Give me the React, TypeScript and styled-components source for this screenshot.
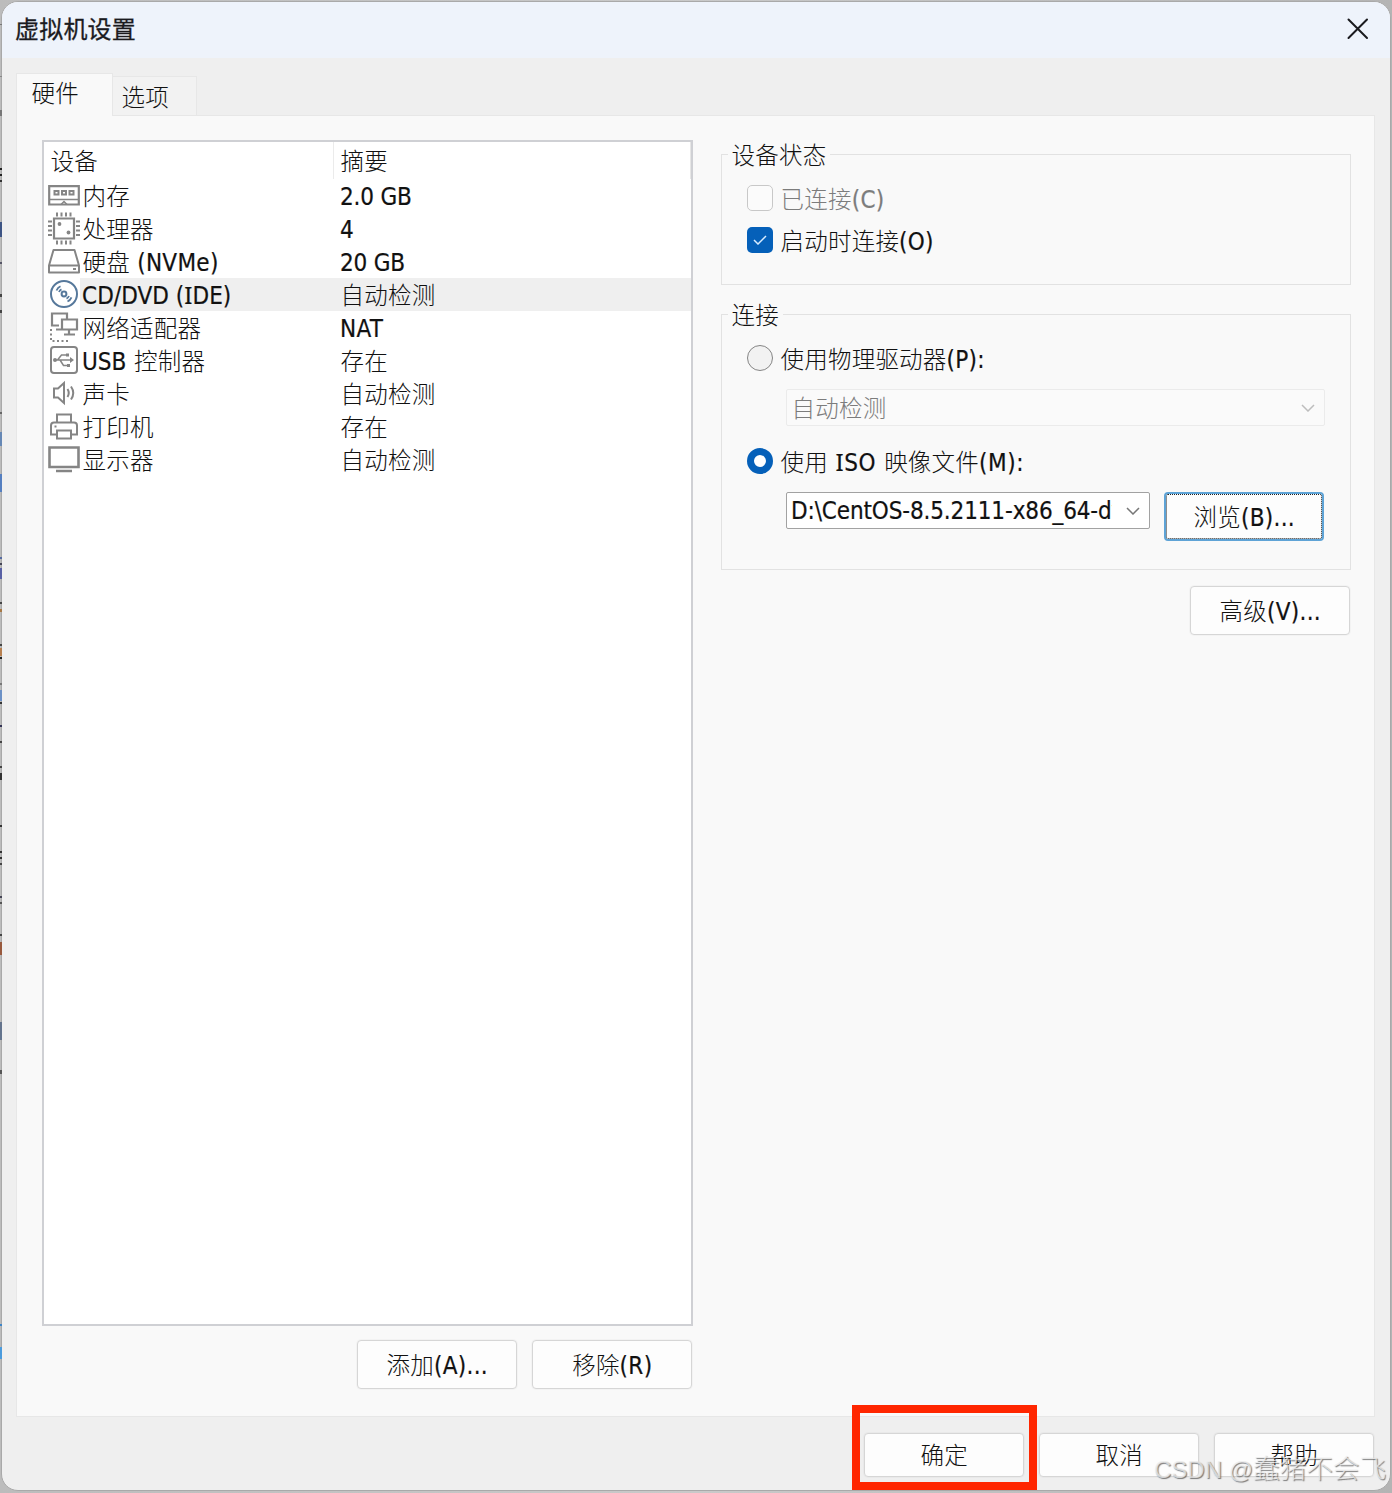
import React from "react";
import styled, { createGlobalStyle } from "styled-components";

const GlobalStyle = createGlobalStyle`
  * { box-sizing: border-box; }
  body {
    margin: 0;
    background: #c9c9c9;
    overflow: hidden;
    font-family: "DejaVu Sans Condensed", "Noto Sans", "Noto Sans CJK SC", sans-serif;
    font-size: 24px;
    color: #111;
  }
`;

const Desktop = styled.div`
  position: relative;
  width: 1392px;
  height: 1493px;
  padding: 1px 1px 2px 1px;
  background: linear-gradient(90deg, #bcbcbc 0, #c9c9c9 50%, #b4b4b4 100%);
`;

const EdgeStrip = styled.svg`
  position: absolute;
  left: 0;
  top: 0;
`;

const Window = styled.div`
  position: relative;
  height: 1490px;
  border: 1px solid #a9a9a9;
  border-radius: 17px;
  background: #efefef;
  overflow: hidden;
  display: flex;
  flex-direction: column;
`;

const TitleBar = styled.header`
  flex: none;
  height: 56px;
  padding: 0 21px 2px 13px;
  background: #eef3fb;
  display: flex;
  align-items: center;
  justify-content: space-between;
`;

const Title = styled.h1`
  margin: -2px 0 0;
  font: 400 24px/34px "Noto Sans CJK SC", sans-serif;
  letter-spacing: 0.2px;
  color: #1b1b1f;
  -webkit-text-stroke: 0.3px #1b1b1f;
`;

const CloseButton = styled.button`
  width: 22px;
  height: 22px;
  padding: 0;
  border: 0;
  background: none;
  display: flex;
`;

const Tabs = styled.nav`
  flex: none;
  height: 57px;
  padding-left: 14px;
  display: flex;
  align-items: flex-end;
`;

const Tab = styled.div<{ $active?: boolean }>`
  width: ${(p) => (p.$active ? 97 : 84)}px;
  height: ${(p) => (p.$active ? 43 : 39)}px;
  margin-bottom: ${(p) => (p.$active ? -1 : 0)}px;
  padding: ${(p) => (p.$active ? "0 0 4px 14px" : "2px 0 0 8px")};
  border: 1px solid #e7e7e7;
  border-left-width: ${(p) => (p.$active ? 1 : 0)}px;
  border-bottom: 0;
  background: ${(p) => (p.$active ? "#f9f9f9" : "#f2f2f2")};
  z-index: ${(p) => (p.$active ? 1 : 0)};
  display: flex;
  align-items: center;
`;

const Panel = styled.main`
  flex: none;
  height: 1302px;
  margin: 0 15px 0 14px;
  padding: 24px 24px 0 25px;
  border: 1px solid #e7e7e7;
  background: #f9f9f9;
  display: flex;
  gap: 28px;
`;

const DeviceColumn = styled.section`
  width: 651px;
  flex: none;
`;

const SettingsColumn = styled.section`
  width: 630px;
  flex: none;
  padding-top: 14px;
`;

const DeviceList = styled.div`
  height: 1186px;
  border: 2px solid #cfd0d4;
  background: #fff;
`;

const ListHeader = styled.div`
  height: 37px;
  display: grid;
  grid-template-columns: 290px 1fr;
  border-right: 1px solid #e6e6e6;
`;

const HeaderCell = styled.div`
  padding-left: 6px;
  border-right: 1px solid #ebebeb;
  display: flex;
  align-items: center;
  &:last-child { border: 0; }
`;

const DeviceRow = styled.div`
  height: 33px;
  padding-left: 4px;
  display: flex;
`;

const IconBox = styled.div`
  width: 32px;
  display: flex;
  align-items: center;
  svg { display: block; }
`;

const RowCells = styled.div<{ $selected?: boolean }>`
  flex: 1;
  padding-left: 2px;
  background: ${(p) => (p.$selected ? "#efefef" : "transparent")};
  display: grid;
  grid-template-columns: 258px 1fr;
  align-items: center;
`;

const Buttons = styled.div<{ $gapTop: number }>`
  margin: ${(p) => p.$gapTop}px 1px 0 0;
  display: flex;
  justify-content: flex-end;
  gap: 15px;
`;

const PushButton = styled.button<{ $focused?: boolean; $low?: boolean }>`
  width: 160px;
  height: ${(p) => (p.$low ? 44 : 49)}px;
  margin-right: ${(p) => (p.$focused ? 1 : 0)}px;
  padding: 0;
  font: inherit;
  color: inherit;
  flex: none;
  border: ${(p) => (p.$focused ? "2px solid #5ea3d6" : "1px solid #d6d6d6")};
  border-radius: 4px;
  outline: ${(p) => (p.$focused ? "1px dotted #222" : "none")};
  outline-offset: -3px;
  background: #fdfdfd;
  box-shadow: ${(p) => (p.$focused ? "none" : "0 0 0 1px rgba(0,0,0,.025)")};
  display: flex;
  align-items: center;
  justify-content: center;
`;

const Group = styled.div<{ $height: number }>`
  height: ${(p) => p.$height}px;
  border: 1px solid #e2e2e2;
  & + & { margin-top: 29px; }
`;

const Legend = styled.div`
  width: max-content;
  height: 30px;
  margin: -15px 0 0 6px;
  padding: 0 4px 0 3px;
  background: #f9f9f9;
  display: flex;
  align-items: center;
`;

const Option = styled.label<{ $height: number; $before?: number; $after?: number; $disabled?: boolean }>`
  height: ${(p) => p.$height}px;
  margin-top: ${(p) => p.$before ?? 0}px;
  margin-bottom: ${(p) => p.$after ?? 0}px;
  padding-left: 25px;
  color: ${(p) => (p.$disabled ? "#7c7c7c" : "#111")};
  display: flex;
  align-items: center;
  gap: 7px;
  & > span:last-child { margin-top: 2px; }
`;

const Check = styled.span<{ $on?: boolean }>`
  width: 26px;
  height: 26px;
  border: ${(p) => (p.$on ? 0 : "1.5px solid #c8c8c8")};
  border-radius: 5px;
  background: ${(p) => (p.$on ? "#0560b9" : "#fbfbfb")};
  display: flex;
  align-items: center;
  justify-content: center;
`;

const Radio = styled.span<{ $on?: boolean }>`
  width: 26px;
  height: 26px;
  border-radius: 50%;
  border: ${(p) => (p.$on ? "7.5px solid #0560b9" : "1.5px solid #858585")};
  background: ${(p) => (p.$on ? "#fff" : "#f2f2f2")};
`;

const ControlRow = styled.div`
  padding: 0 25px 0 64px;
  display: flex;
  justify-content: space-between;
  align-items: flex-start;
`;

const Combo = styled.div<{ $width: number; $disabled?: boolean }>`
  width: ${(p) => p.$width}px;
  height: 37px;
  padding: 0 9px 0 4px;
  border: 1px solid ${(p) => (p.$disabled ? "#ebebeb" : "#a2a2a2")};
  border-radius: 2px;
  background: ${(p) => (p.$disabled ? "#fafafa" : "#fff")};
  color: ${(p) => (p.$disabled ? "#7c7c7c" : "#111")};
  display: flex;
  align-items: center;
  justify-content: space-between;
`;

const ComboValue = styled.div<{ $width: number }>`
  width: ${(p) => p.$width}px;
  margin-top: -2px;
  overflow: hidden;
`;

const Footer = styled.footer`
  flex: 1;
  padding: 0 15px 0 14px;
`;

const RedFrame = styled.div`
  position: absolute;
  left: 852px;
  top: 1405px;
  width: 185px;
  height: 85px;
  border: 8px solid #ff2600;
`;

const Watermark = styled.div`
  position: absolute;
  left: 1154px;
  top: 1451px;
  font: 400 24px/38px "Liberation Sans", "Noto Sans CJK SC", sans-serif;
  white-space: nowrap;
  color: rgba(238, 238, 238, 0.75);
  text-shadow: 1px 1px 1px rgba(80, 80, 80, 0.75);
  b { font: 300 26.6px/1px "Noto Sans CJK SC Light", "Noto Sans CJK SC", sans-serif; }
`;

const Line = styled.span`
  display: block;
  height: 32px;
  padding-top: 1px;
  line-height: 32px;
  white-space: pre;
`;

const Han = styled.span`
  margin-left: 0.6px;
  font-family: "Noto Sans CJK SC Light", "Noto Sans CJK SC", sans-serif;
  font-weight: 300;
  font-size: 23.5px;
  line-height: 1px;
  letter-spacing: 0.2px;
`;

const Latin = styled.span<{ $spacing: number }>`
  letter-spacing: ${(p) => p.$spacing}px;
  -webkit-text-stroke: 0.2px currentColor;
`;

const BarredI = styled.span`
  font-family: "Noto Sans", sans-serif;
  line-height: 1px;
`;

function Text({ children, spacing = 0.3 }: { children: string; spacing?: number }) {
  const runs = children.match(/[\u4e00-\u9fff]+|[^\u4e00-\u9fff]+/g) ?? [];
  return (
    <Line>
      {runs.map((run, i) =>
        /[\u4e00-\u9fff]/.test(run) ? (
          <Han key={i}>{run}</Han>
        ) : (
          <Latin key={i} $spacing={spacing}>
            {run.split(/(I)/).map((s, k) => (s === "I" ? <BarredI key={k}>I</BarredI> : s))}
          </Latin>
        )
      )}
    </Line>
  );
}

function Glyph({ children, color = "#858585" }: { children: React.ReactNode; color?: string }) {
  return (
    <svg width="32" height="33" viewBox="0 0 32 33" fill="none" stroke={color} strokeWidth="2">
      {children}
    </svg>
  );
}

const icons = {
  memory: (
    <Glyph>
      <path d="M1.200 7.200h29.600v18.300H1.200z" strokeWidth="2.200" />
      <path d="M1 20.500h30" strokeWidth="1.600" />
      <path d="M6.500 12h4v3.500h-4zM14 12h4v3.500h-4zM21.500 12h4v3.500h-4z" strokeWidth="2" />
      <path d="M13 25.500l3-3 3 3" strokeWidth="1.500" />
    </Glyph>
  ),
  cpu: (
    <Glyph>
      <path d="M6 6.500h20v20H6z" strokeWidth="2.200" />
      <path
        d="M9 .5v4M13.500.5v4M18 .5v4M22.500.5v4M9 28.500v4M13.500 28.500v4M18 28.500v4M22.500 28.500v4M0 9.500h4M0 14h4M0 18.500h4M0 23h4M28 9.500h4M28 14h4M28 18.500h4M28 23h4"
        strokeWidth="2"
      />
      <circle cx="11.500" cy="12" r="1.900" fill="#858585" stroke="none" />
      <circle cx="20.500" cy="20.500" r="1.900" fill="#858585" stroke="none" />
    </Glyph>
  ),
  disk: (
    <Glyph>
      <path d="M1 20.500L5.500 5h21L31 20.500v7H1zM1 20.500h30" strokeLinejoin="round" />
      <path d="M25 24h3" />
    </Glyph>
  ),
  disc: (
    <Glyph color="#56789b">
      <circle cx="16" cy="16" r="13" />
      <circle cx="16" cy="16" r="2.400" />
      <path d="M8.500 12.500q1.300-3 4-4.200M11 14q.8-1.800 2.500-2.600M18.500 20.600q1.700-.8 2.500-2.600M19.500 23.500q2.800-1.300 4-4.200" strokeWidth="1.800" />
    </Glyph>
  ),
  network: (
    <Glyph>
      <path d="M11 14.500H4V2.500h15V9M14 8.500h15v10H14zM21 19v4M16 23.500h11M8 18.500h6" strokeWidth="2.200" />
      <path d="M3 18v12h19" strokeDasharray="2 2.500" />
    </Glyph>
  ),
  usb: (
    <Glyph>
      <rect x="3" y="3" width="26" height="26" rx="3" />
      <path d="M6 16h18M9.500 16l4-5h5M12 16l3.500 5.500h4" strokeWidth="1.500" />
      <path d="M22 13l4 3-4 3zM18 9.500h3v3h-3zM19 20h3v3h-3z" fill="#858585" stroke="none" />
      <circle cx="7" cy="16" r="2" fill="#858585" stroke="none" />
    </Glyph>
  ),
  sound: (
    <Glyph>
      <path d="M6 11.500h4l6-5.500v20l-6-5.500H6z" />
      <path d="M19.500 12q2.500 4 0 8M23 9.500q4.500 6.500 0 13" />
    </Glyph>
  ),
  printer: (
    <Glyph>
      <path d="M9 12.500V4.500h14v8M9 24.500H3V15.500q0-3 3-3h20q3 0 3 3v9h-6M9 20.500h14v8H9z" />
      <path d="M6.500 16.500h2" />
    </Glyph>
  ),
  display: (
    <Glyph>
      <path d="M1.500 4.500h29v19.500h-29z" strokeWidth="2.600" />
      <path d="M8 28h16" strokeWidth="2.500" />
    </Glyph>
  ),
};

const devices: { icon: keyof typeof icons; name: string; summary: string }[] = [
  { icon: "memory", name: "内存", summary: "2.0 GB" },
  { icon: "cpu", name: "处理器", summary: "4" },
  { icon: "disk", name: "硬盘 (NVMe)", summary: "20 GB" },
  { icon: "disc", name: "CD/DVD (IDE)", summary: "自动检测" },
  { icon: "network", name: "网络适配器", summary: "NAT" },
  { icon: "usb", name: "USB 控制器", summary: "存在" },
  { icon: "sound", name: "声卡", summary: "自动检测" },
  { icon: "printer", name: "打印机", summary: "存在" },
  { icon: "display", name: "显示器", summary: "自动检测" },
];

/* Slivers of the page behind the dialog: [top, height, colour]. */
const slivers: [number, number, string][] = [
  [24, 1, "#777"], [76, 1, "#888"], [110, 6, "#777"], [168, 2, "#222"], [174, 2, "#222"], [180, 2, "#333"],
  [222, 15, "#3d5484"], [262, 2, "#556"], [294, 3, "#444"], [310, 3, "#444"], [412, 2, "#666"],
  [432, 14, "#6688b5"], [474, 18, "#557fc0"], [557, 2, "#556aa0"], [563, 2, "#445"], [568, 11, "#5961a5"],
  [602, 2, "#444"], [609, 3, "#a87945"], [644, 2, "#444"], [648, 8, "#b78050"], [657, 2, "#222"],
  [683, 2, "#777"], [690, 11, "#6c91c6"], [702, 2, "#333"], [725, 2, "#335"], [741, 2, "#444"],
  [766, 2, "#444"], [773, 7, "#333"], [825, 2, "#333"], [851, 2, "#333"], [857, 2, "#333"], [863, 2, "#444"],
  [896, 2, "#445"], [902, 2, "#555"], [934, 2, "#444"], [942, 13, "#98593d"], [1022, 18, "#64748d"],
  [1070, 4, "#555"], [1324, 2, "#3c85c9"], [1347, 12, "#4b9bdd"],
];

const Chevron = ({ color }: { color: string }) => (
  <svg width="14" height="8" viewBox="0 0 14 8" fill="none" stroke={color} strokeWidth="1.500">
    <path d="M1 1l6 6 6-6" />
  </svg>
);

export default function App() {
  return (
    <>
      <GlobalStyle />
      <Desktop>
        <Window>
          <TitleBar>
            <Title>虚拟机设置</Title>
            <CloseButton aria-label="关闭">
              <svg width="22" height="22" viewBox="0 0 22 22" stroke="#1a1a1e" strokeWidth="2" strokeLinecap="round">
                <path d="M1.500 1.500l18.500 18.500M20 1.500L1.500 20" />
              </svg>
            </CloseButton>
          </TitleBar>
          <Tabs>
            <Tab $active><Text>硬件</Text></Tab>
            <Tab><Text>选项</Text></Tab>
          </Tabs>
          <Panel>
            <DeviceColumn>
              <DeviceList>
                <ListHeader>
                  <HeaderCell><Text>设备</Text></HeaderCell>
                  <HeaderCell><Text>摘要</Text></HeaderCell>
                </ListHeader>
                {devices.map((d) => (
                  <DeviceRow key={d.icon}>
                    <IconBox>{icons[d.icon]}</IconBox>
                    <RowCells $selected={d.icon === "disc"}>
                      <Text spacing={/^[A-Z]/.test(d.name) ? 0.05 : 0.3}>{d.name}</Text>
                      <Text spacing={d.summary.endsWith("GB") ? -0.2 : 0.3}>{d.summary}</Text>
                    </RowCells>
                  </DeviceRow>
                ))}
              </DeviceList>
              <Buttons $gapTop={14}>
                <PushButton><Text>添加(A)...</Text></PushButton>
                <PushButton><Text>移除(R)</Text></PushButton>
              </Buttons>
            </DeviceColumn>
            <SettingsColumn>
              <Group $height={131}>
                <Legend><Text>设备状态</Text></Legend>
                <Option $height={56} $disabled>
                  <Check />
                  <Text>已连接(C)</Text>
                </Option>
                <Option $height={28}>
                  <Check $on>
                    <svg width="14" height="10" viewBox="0 0 14 10" fill="none" stroke="#d8ecff" strokeWidth="1.500">
                      <path d="M1 5l4 4 8-8" />
                    </svg>
                  </Check>
                  <Text>启动时连接(O)</Text>
                </Option>
              </Group>
              <Group $height={256}>
                <Legend><Text>连接</Text></Legend>
                <Option $height={55} $after={4}>
                  <Radio />
                  <Text>使用物理驱动器(P):</Text>
                </Option>
                <ControlRow>
                  <Combo $width={539} $disabled>
                    <Text>自动检测</Text>
                    <Chevron color="#bdbdbd" />
                  </Combo>
                </ControlRow>
                <Option $height={62} $before={4}>
                  <Radio $on />
                  <Text spacing={0.6}>使用 ISO 映像文件(M):</Text>
                </Option>
                <ControlRow>
                  <Combo $width={364}>
                    <ComboValue $width={321}>
                      <Text spacing={-0.13}>D:\CentOS-8.5.2111-x86_64-dvd1.iso</Text>
                    </ComboValue>
                    <Chevron color="#777" />
                  </Combo>
                  <PushButton $focused><Text>浏览(B)...</Text></PushButton>
                </ControlRow>
              </Group>
              <Buttons $gapTop={16}>
                <PushButton><Text>高级(V)...</Text></PushButton>
              </Buttons>
            </SettingsColumn>
          </Panel>
          <Footer>
            <Buttons $gapTop={16}>
              <PushButton $low><Text>确定</Text></PushButton>
              <PushButton $low><Text>取消</Text></PushButton>
              <PushButton $low><Text>帮助</Text></PushButton>
            </Buttons>
          </Footer>
        </Window>
        <EdgeStrip width="2" height="1493">
          {slivers.map(([y, h, c]) => (
            <rect key={y} x="0" y={y} width="2" height={h} fill={c} />
          ))}
        </EdgeStrip>
        <RedFrame />
        <Watermark>CSDN @<b>蠢猪不会飞</b></Watermark>
      </Desktop>
    </>
  );
}
